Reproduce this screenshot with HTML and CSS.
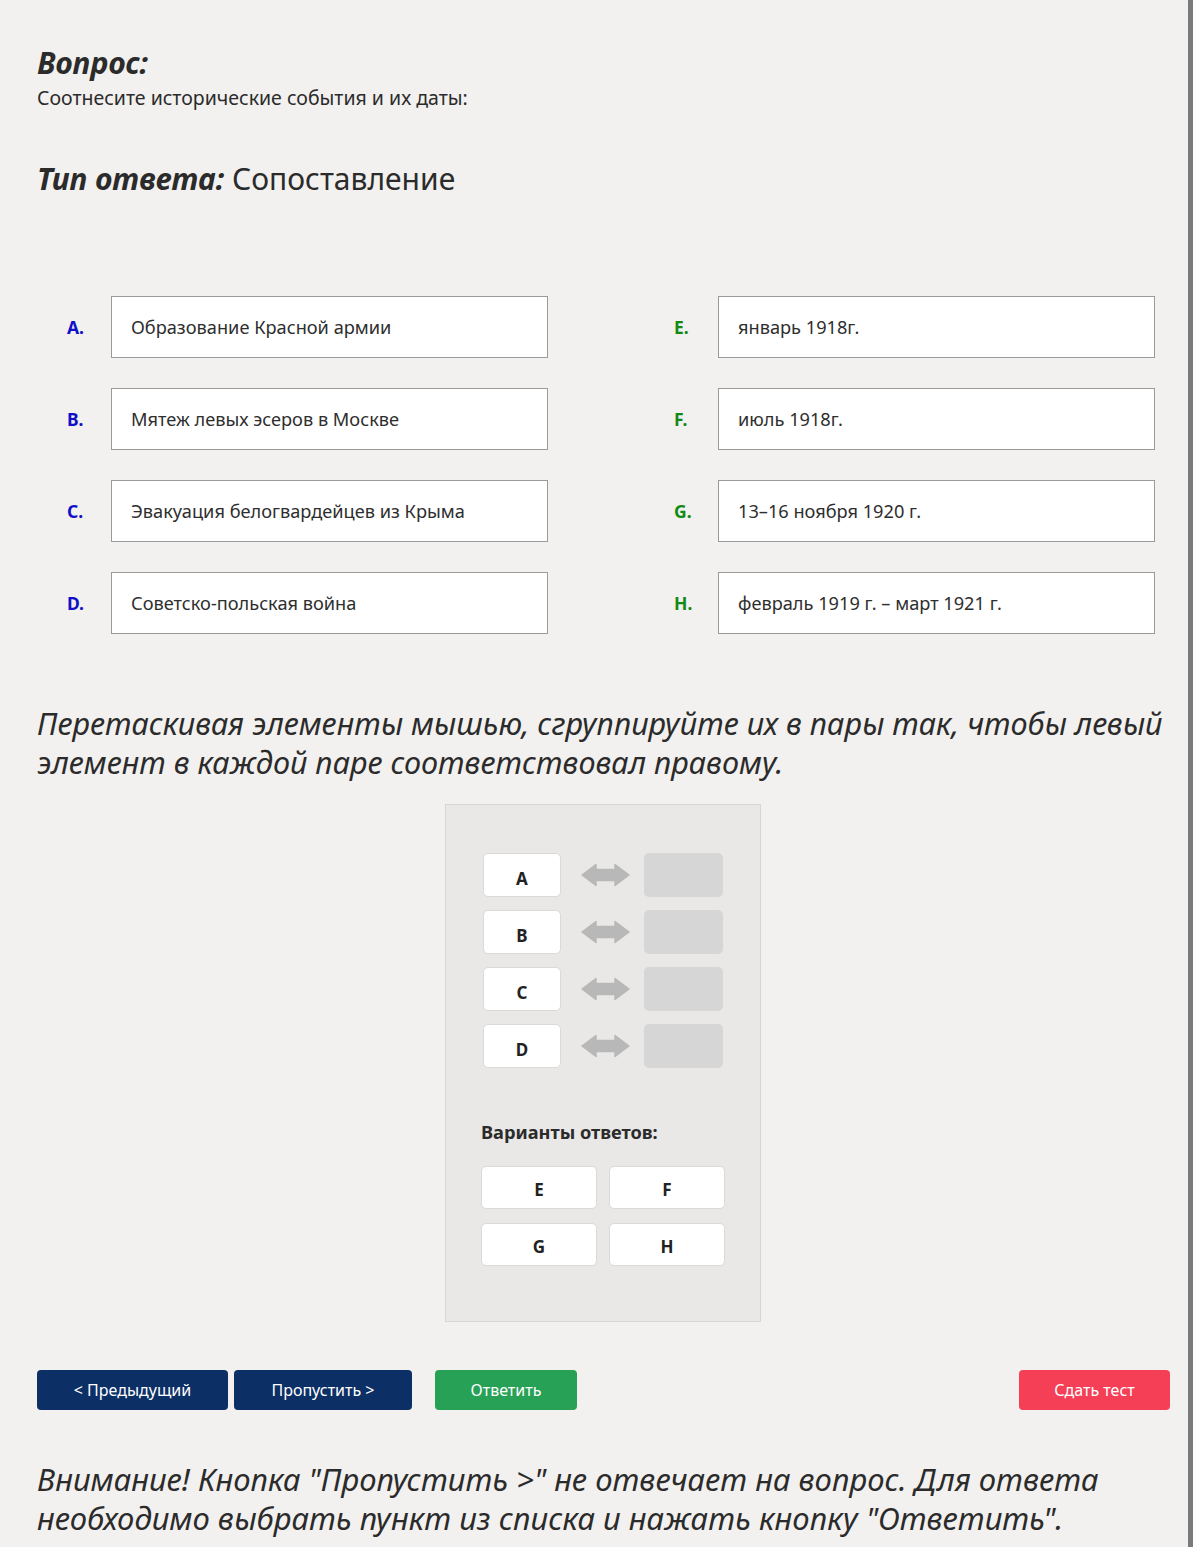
FILE: index.html
```html
<!DOCTYPE html>
<html lang="ru">

<head>
    <meta charset="UTF-8">
    <title>Тест - Вопрос</title>
    <link rel="stylesheet" href="styles.css">
</head>

<body>

    <div class="page">

        <!-- Question -->
        <h2 class="q-title">Вопрос:</h2>
        <p class="q-text">Соотнесите исторические события и их даты:</p>

        <h2 class="answer-type"><em>Тип ответа:</em> Сопоставление</h2>

        <!-- Pairs list -->
        <div class="pairs">
            <div class="pair-item">
                <span class="mark mark-left">A.</span>
                <div class="pair-box">Образование Красной армии</div>
            </div>
            <div class="pair-item">
                <span class="mark mark-right">E.</span>
                <div class="pair-box">январь 1918г.</div>
            </div>
            <div class="pair-item">
                <span class="mark mark-left">B.</span>
                <div class="pair-box">Мятеж левых эсеров в Москве</div>
            </div>
            <div class="pair-item">
                <span class="mark mark-right">F.</span>
                <div class="pair-box">июль 1918г.</div>
            </div>
            <div class="pair-item">
                <span class="mark mark-left">C.</span>
                <div class="pair-box">Эвакуация белогвардейцев из Крыма</div>
            </div>
            <div class="pair-item">
                <span class="mark mark-right">G.</span>
                <div class="pair-box">13–16 ноября 1920 г.</div>
            </div>
            <div class="pair-item">
                <span class="mark mark-left">D.</span>
                <div class="pair-box">Советско-польская война</div>
            </div>
            <div class="pair-item">
                <span class="mark mark-right">H.</span>
                <div class="pair-box">февраль 1919 г. – март 1921 г.</div>
            </div>
        </div>

        <p class="hint">Перетаскивая элементы мышью, сгруппируйте их в пары так, чтобы левый элемент в каждой паре соответствовал правому.</p>

        <!-- Drag & drop panel -->
        <div class="dnd-panel">
            <div class="match-rows" id="matchRows"></div>

            <div class="variants-title">Варианты ответов:</div>
            <div class="variants">
                <div class="chip">E</div>
                <div class="chip">F</div>
                <div class="chip">G</div>
                <div class="chip">H</div>
            </div>
        </div>

        <!-- Navigation -->
        <div class="nav">
            <button class="btn btn-navy btn-prev">&lt; Предыдущий</button>
            <button class="btn btn-navy btn-skip">Пропустить &gt;</button>
            <button class="btn btn-green">Ответить</button>
            <button class="btn btn-red">Сдать тест</button>
        </div>

        <p class="warning">Внимание! Кнопка "Пропустить &gt;" не отвечает на вопрос. Для ответа необходимо выбрать пункт из списка и нажать кнопку "Ответить".</p>

    </div>

    <script>
        // Left side letters
        const letters = ['A', 'B', 'C', 'D'];
        const rows = document.getElementById('matchRows');

        const arrow = `
            <svg class="arrow" width="49" height="24" viewBox="0 0 49 24">
                <path d="M1 12 L15 1.5 L15 6.5 L34 6.5 L34 1.5 L48 12 L34 22.5 L34 17.5 L15 17.5 L15 22.5 Z"
                      fill="#b8b8b8" stroke="#b8b8b8" stroke-width="1.5" stroke-linejoin="round"/>
            </svg>`;

        letters.forEach(letter => {
            rows.innerHTML += `
                <div class="match-row">
                    <div class="chip chip-letter">${letter}</div>
                    ${arrow}
                    <div class="slot"></div>
                </div>`;
        });
    </script>

</body>

</html>
```

FILE: styles.css
```css
/* Global Styles */
body {
    font-family: 'Noto Sans', 'Open Sans', sans-serif;
    background: #f2f1ef;
    color: #2b2b2b;
    margin: 0;
    border-right: 5px solid #7a7a7a;
    min-height: 1547px;
    box-sizing: border-box;
}

.page {
    padding: 44px 19px 0 37px;
}

/* Question */
.q-title {
    margin: 0;
    font-size: 30px;
    line-height: 38px;
    font-style: italic;
    font-weight: 700;
}

.q-text {
    margin: 2px 0 0;
    font-size: 19.5px;
    line-height: 28px;
}

.answer-type {
    margin: 47px 0 0;
    font-size: 30px;
    line-height: 40px;
    font-weight: 400;
}

.answer-type em {
    font-weight: 700;
}

/* Pairs */
.pairs {
    display: grid;
    grid-template-columns: 481px 481px;
    column-gap: 126px;
    row-gap: 30px;
    margin: 97px 0 0 30px;
}

.pair-item {
    display: flex;
    align-items: center;
}

.mark {
    width: 44px;
    font-size: 17.5px;
    font-weight: 700;
}

.mark-left {
    color: #1010c8;
}

.mark-right {
    color: #138a13;
}

.pair-box {
    flex: 1;
    height: 62px;
    box-sizing: border-box;
    display: flex;
    align-items: center;
    padding: 0 19px;
    background: #fff;
    border: 1px solid #9a9a9a;
    font-size: 18.2px;
    color: #2e2e2e;
}

/* Hint */
.hint {
    margin: 70px 0 0;
    font-size: 30.6px;
    line-height: 39px;
    font-style: italic;
    font-weight: 400;
}

/* Drag & drop panel */
.dnd-panel {
    width: 316px;
    height: 518px;
    box-sizing: border-box;
    margin: 22px auto 0;
    padding: 48px 37px 0 35px;
    background: #e9e8e6;
    border: 1px solid #d6d6d4;
}

.match-rows {
    display: flex;
    flex-direction: column;
    gap: 13px;
    padding-left: 2px;
}

.match-row {
    display: flex;
    align-items: center;
}

.arrow {
    margin: 0 14px 0 20px;
}

.chip {
    height: 44px;
    box-sizing: border-box;
    display: flex;
    align-items: center;
    justify-content: center;
    padding-top: 6px;
    background: #fff;
    border: 1px solid #dadada;
    border-radius: 5px;
    font-size: 17px;
    font-weight: 700;
    color: #222;
}

.chip-letter {
    width: 78px;
}

.slot {
    width: 79px;
    height: 44px;
    background: #d6d6d6;
    border-radius: 5px;
}

.variants-title {
    margin-top: 52px;
    font-size: 18.2px;
    font-weight: 700;
    color: #2b2b2b;
}

.variants {
    display: grid;
    grid-template-columns: 116px 116px;
    gap: 14px 12px;
    margin-top: 22px;
}

.variants .chip {
    height: 43px;
    padding-top: 4px;
}

/* Navigation */
.nav {
    display: flex;
    margin-top: 48px;
}

.btn {
    height: 40px;
    border: none;
    border-radius: 4px;
    color: #fff;
    font-family: inherit;
    font-size: 16px;
    cursor: pointer;
}

.btn-navy {
    background: #0c2f66;
}

.btn-prev {
    width: 191px;
}

.btn-skip {
    width: 178px;
    margin-left: 6px;
}

.btn-green {
    width: 142px;
    margin-left: 23px;
    background: #27a156;
}

.btn-red {
    width: 151px;
    margin-left: auto;
    margin-right: -1px;
    background: #f43f57;
}

/* Warning */
.warning {
    margin: 50px 0 0;
    font-size: 31px;
    line-height: 39px;
    font-style: italic;
    font-weight: 400;
}
```
